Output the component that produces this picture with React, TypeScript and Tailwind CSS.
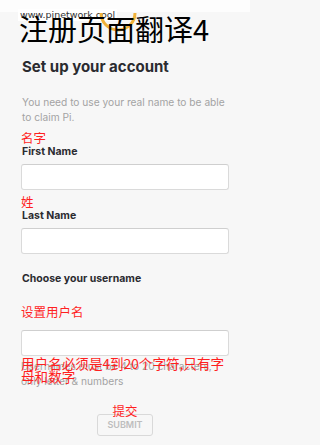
import React from "react";

const cjk = { fontFamily: '"Noto Sans CJK SC", "Noto Sans", sans-serif' };
const ui = { fontFamily: 'Inter, "Liberation Sans", sans-serif' };

const Field = () => (
  <div className="h-[26px] w-[208px] rounded-[3px] border border-[#dadada] border-t-[#cfcfcf] bg-white" />
);

const RedLabel = ({ children, className = "" }: { children: React.ReactNode; className?: string }) => (
  <div className={`text-[12.5px] leading-[14px] text-[#ff1f1f] ${className}`} style={cjk}>
    {children}
  </div>
);

export default function App() {
  return (
    <div className="h-[445px] w-full overflow-hidden bg-[#f7f7f7]" style={ui}>
      <div className="relative h-[445px] w-[250px]">
        {/* watermark strip */}
        <div className="h-[12px] bg-[#fdfdfd]">
          <span
            className="ml-[18px] inline-block bg-white px-[2px] text-[9.5px] leading-[12px] text-[#333]"
            style={{ fontFamily: '"DejaVu Sans", sans-serif' }}
          >
            www.pinetwork.cool
          </span>
        </div>

        {/* overlay title */}
        <div className="relative mt-[1px] h-[30px] pl-[19px]">
          <svg className="absolute left-[98px] top-[-5px]" width="40" height="30" viewBox="0 0 40 30">
            <path d="M3 5 A 17 17 0 0 0 37 5" fill="none" stroke="#f0b23a" strokeWidth="3" />
          </svg>
          <div className="relative text-[29px] leading-[30px] text-black" style={cjk}>
            注册页面翻译4
          </div>
        </div>

        <div className="flex flex-col pl-[21px] pr-[18px]">
          <div className="ml-[1px] mt-[14px] text-[15px] font-bold leading-[20px] text-[#2b2b30]">
            Set up your account
          </div>
          <div className="ml-[1px] mt-[18px] text-[10.2px] leading-[15px] text-[#a3a3a3]">
            You need to use your real name to be able to claim Pi.
          </div>

          <RedLabel className="mt-[6px]">名字</RedLabel>
          <div className="ml-[1px] text-[10.5px] font-bold leading-[13px] text-[#2b2b30]">First Name</div>
          <div className="mt-[6px]">
            <Field />
          </div>

          <RedLabel className="mt-[5px]">姓</RedLabel>
          <div className="ml-[1px] text-[10.5px] font-bold leading-[13px] text-[#2b2b30]">Last Name</div>
          <div className="mt-[6px]">
            <Field />
          </div>

          <div className="ml-[1px] mt-[18px] text-[10.5px] font-bold leading-[14px] text-[#2b2b30]">
            Choose your username
          </div>
          <RedLabel className="mt-[19px]">设置用户名</RedLabel>
          <div className="mt-[11px]">
            <Field />
          </div>

          <div className="relative mt-[3px]">
            <div className="text-[10.2px] leading-[15px] text-[#a3a3a3]">
              Usernames must be 4 to 20 characters,
              <br />
              only letter &amp; numbers
            </div>
            <div
              className="absolute left-0 right-0 top-[-2px] text-[13.6px] leading-[13px] text-[#ff1f1f]"
              style={cjk}
            >
              用户名必须是4到20个字符,只有字母和数字
            </div>
          </div>

          <div className="mt-[15px] flex flex-col items-center pr-[3px]">
            <RedLabel className="relative z-10 mb-[-4px]">提交</RedLabel>
            <div className="flex h-[22px] w-[56px] items-center justify-center rounded-[3px] border border-[#d9d9d9] text-[9px] font-semibold text-[#bdbdbd]">
              SUBMIT
            </div>
          </div>
        </div>
      </div>
    </div>
  );
}
